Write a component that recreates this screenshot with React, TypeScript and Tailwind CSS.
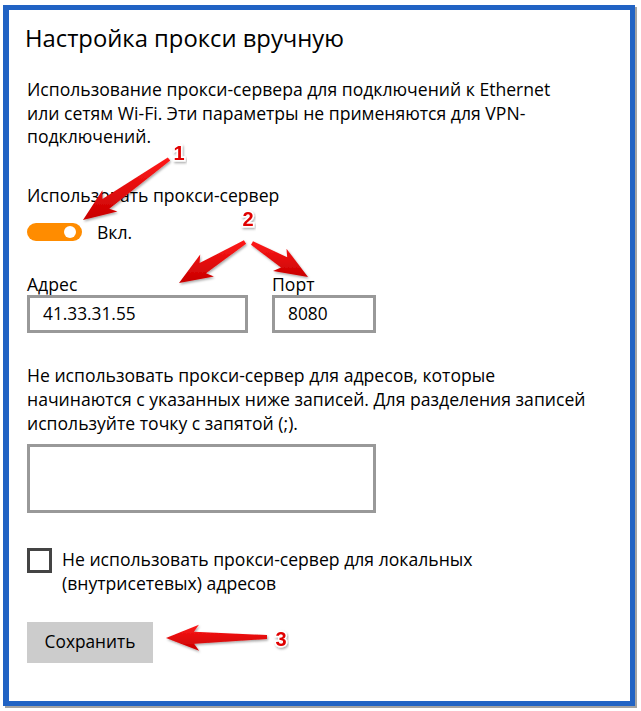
import React from "react";

type Pt = [number, number];

// tapered annotation arrow, tail -> tip
function arrowPoints(tail: Pt, tip: Pt, head = 28, hw = 13, w0 = 2, w1 = 6) {
  const dx = tip[0] - tail[0];
  const dy = tip[1] - tail[1];
  const len = Math.hypot(dx, dy);
  const ux = dx / len;
  const uy = dy / len;
  const nx = -uy;
  const ny = ux;
  const bx = tip[0] - ux * head;
  const by = tip[1] - uy * head;
  const barbX = bx - ux * 5;
  const barbY = by - uy * 5;
  const pts: Pt[] = [
    [tail[0] + nx * w0, tail[1] + ny * w0],
    [bx + nx * w1, by + ny * w1],
    [barbX + nx * hw, barbY + ny * hw],
    tip,
    [barbX - nx * hw, barbY - ny * hw],
    [bx - nx * w1, by - ny * w1],
    [tail[0] - nx * w0, tail[1] - ny * w0],
  ];
  return pts.map((p) => `${p[0].toFixed(1)},${p[1].toFixed(1)}`).join(" ");
}

function Annotations() {
  const arrows: [Pt, Pt][] = [
    [[169, 159], [83, 220]],
    [[245, 242], [179, 283]],
    [[252, 243], [308, 277]],
    [[267, 637], [166, 638]],
  ];
  const labels: { x: number; y: number; t: string }[] = [
    { x: 179, y: 160, t: "1" },
    { x: 248, y: 226, t: "2" },
    { x: 281, y: 646, t: "3" },
  ];
  return (
    <svg
      className="absolute left-0 top-0 pointer-events-none"
      width={641}
      height={711}
      viewBox="0 0 641 711"
    >
      <defs>
        <linearGradient id="red" x1="0" y1="0" x2="0" y2="1">
          <stop offset="0" stopColor="#ff1a1a" />
          <stop offset="1" stopColor="#c80000" />
        </linearGradient>
        <filter id="sh" x="-20%" y="-20%" width="140%" height="140%">
          <feDropShadow dx="1" dy="1.5" stdDeviation="1" floodColor="#000" floodOpacity="0.35" />
        </filter>
      </defs>
      {arrows.map(([t, p], i) => (
        <polygon key={i} points={arrowPoints(t, p)} fill="url(#red)" filter="url(#sh)" />
      ))}
      {labels.map((l) => (
        <text
          key={l.t}
          x={l.x}
          y={l.y}
          textAnchor="middle"
          fontFamily="'Liberation Sans', Arial, sans-serif"
          fontWeight={700}
          fontSize={20}
          fill="#e00000"
          stroke="#fff"
          strokeWidth={3}
          paintOrder="stroke"
          filter="url(#sh)"
        >
          {l.t}
        </text>
      ))}
    </svg>
  );
}

export default function App() {
  return (
    <div
      className="relative w-[641px] h-[711px] bg-white text-black overflow-hidden"
      style={{ fontFamily: "'Open Sans', 'Noto Sans', sans-serif" }}
    >
      <div className="ml-[3px] mt-[5px] w-[632px] h-[701px] border-[5px] border-l-[6px] border-[#2163c4] shadow-[2px_2px_0_#a3a3a3] pl-[18px] pt-[12px] flex flex-col items-start">
        <h1 className="-ml-[2px] text-[23.8px] leading-[32px] font-normal">Настройка прокси вручную</h1>

        <p className="mt-[24px] text-[17.6px] leading-[23.5px]">
          Использование прокси-сервера для подключений к Ethernet
          <br />
          или сетям Wi-Fi. Эти параметры не применяются для VPN-
          <br />
          подключений.
        </p>

        <div className="mt-[34px] text-[17.6px] leading-[24px]">Использовать прокси-сервер</div>

        <div className="mt-[13px] flex items-center gap-[15px] h-[24px]">
          <div className="w-[55px] h-[18px] rounded-full bg-[#ff8c00] flex items-center justify-end pr-[6px]">
            <div className="w-[12px] h-[12px] rounded-full bg-white" />
          </div>
          <span className="text-[17.6px] leading-[24px]">Вкл.</span>
        </div>

        <div className="mt-[29px] flex gap-[24px]">
          <div className="flex flex-col">
            <span className="text-[17.6px] leading-[22px]">Адрес</span>
            <div className="w-[221px] h-[38px] border-[3px] border-[#999999] flex items-center pl-[13px] text-[17.3px]">
              41.33.31.55
            </div>
          </div>
          <div className="flex flex-col">
            <span className="text-[17.6px] leading-[22px]">Порт</span>
            <div className="w-[104px] h-[38px] border-[3px] border-[#999999] flex items-center pl-[13px] text-[17.3px]">
              8080
            </div>
          </div>
        </div>

        <p className="mt-[30px] text-[17.6px] leading-[24px]">
          Не использовать прокси-сервер для адресов, которые
          <br />
          начинаются с указанных ниже записей. Для разделения записей
          <br />
          используйте точку с запятой (;).
        </p>

        <div className="mt-[9px] w-[349px] h-[69px] border-[3px] border-[#999999]" />

        <div className="mt-[35px] flex items-start gap-[10px]">
          <div className="w-[25px] h-[25px] border-[3px] border-[#444444] shrink-0" />
          <p className="-mt-[1px] text-[17.6px] leading-[24px]">
            Не использовать прокси-сервер для локальных
            <br />
            (внутрисетевых) адресов
          </p>
        </div>

        <button
          type="button"
          className="mt-[27px] w-[126px] h-[41px] bg-[#cccccc] text-[17.3px] flex items-center justify-center"
        >
          Сохранить
        </button>
      </div>
      <Annotations />
    </div>
  );
}
